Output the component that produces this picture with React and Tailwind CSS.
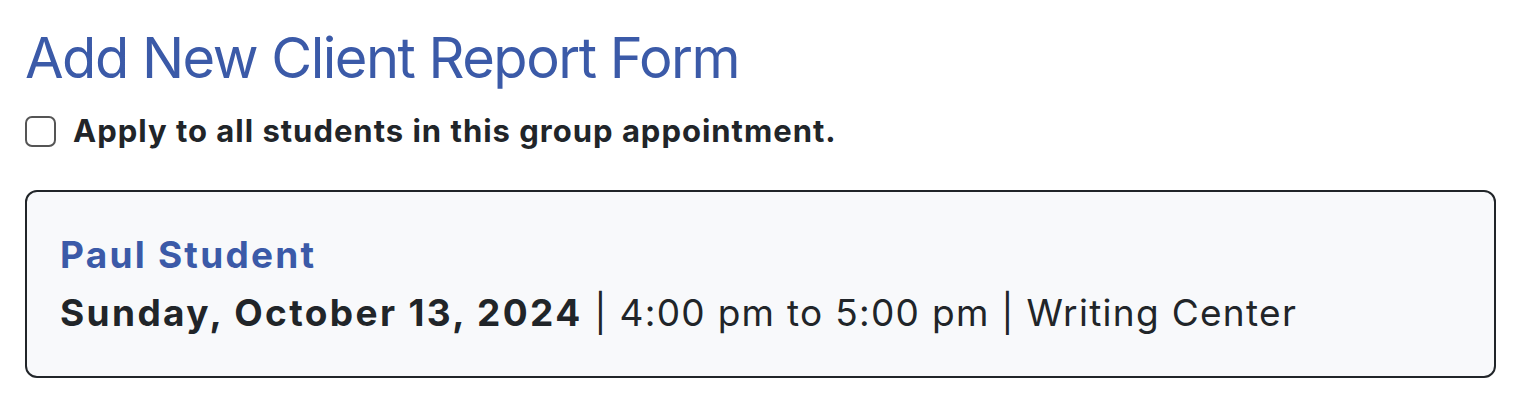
export default function App() {
  return (
    <div className="bg-white min-h-screen px-[25px] pt-[20px] text-[#212529]" style={{ fontFamily: 'Inter, "Liberation Sans", sans-serif' }}>
      <h1 className="text-[56px] leading-[76px] font-normal text-[#3b5aa8] tracking-[-0.027em]">Add New Client Report Form</h1>
      <label className="mt-[18px] flex items-center gap-[17px]">
        <span className="w-[31px] h-[31px] rounded-[7px] border-2 border-[#555] bg-white shrink-0" />
        <span className="text-[31px] font-bold leading-[34px] tracking-[0.032em]">Apply to all students in this group appointment.</span>
      </label>
      <div className="mt-[42px] w-[1471px] rounded-[12px] border-2 border-[#212529] bg-[#f8f9fb] px-[33px] pt-[39px] pb-[39px]">
        <div className="text-[37px] font-bold leading-[48px] text-[#3b5aa8] tracking-[0.06em]">Paul Student</div>
        <div className="mt-[10px] text-[37px] leading-[48px] tracking-[0.035em]">
          <span className="font-bold tracking-[0.064em]">Sunday, October 13, 2024</span> | 4:00 pm to 5:00 pm | Writing Center
        </div>
      </div>
    </div>
  );
}
